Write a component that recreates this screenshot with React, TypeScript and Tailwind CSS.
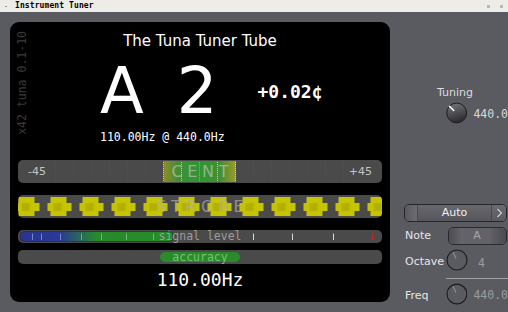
import React from "react";

function CentBar() {
  const ticks: { x: number; c: string; d: string }[] = [];
  for (let k = 0; k < 17; k++) {
    const x = 37.5 + 18 * k;
    let c = "#d01818";
    let d = "3 2";
    if (k === 8) {
      c = "#30e030";
      d = "1.5 1";
    } else if (k >= 6 && k <= 10) {
      c = "#e6e600";
      d = "1 1";
    }
    ticks.push({ x, c, d });
  }
  return (
    <div className="relative mx-[8px] h-[23px] overflow-hidden rounded-[5px] bg-[#4a4a4a]">
      <svg className="absolute inset-0" width="364" height="23">
        <defs>
          <linearGradient id="hl" x1="0" x2="1" y1="0" y2="0">
            <stop offset="0" stopColor="#8e8c28" />
            <stop offset="0.2" stopColor="#428e34" />
            <stop offset="0.5" stopColor="#2e9632" />
            <stop offset="0.78" stopColor="#448e34" />
            <stop offset="1" stopColor="#9c9a2a" />
          </linearGradient>
        </defs>
        <rect x="145.5" y="1" width="72.5" height="21" fill="url(#hl)" />
        {ticks.map((t) => (
          <line
            key={t.x}
            x1={t.x}
            x2={t.x}
            y1={2}
            y2={21}
            stroke={t.c}
            strokeWidth={1}
            strokeDasharray={t.d}
          />
        ))}
      </svg>
      <div className="relative grid h-full grid-cols-[1fr_auto_1fr] items-center px-[10px] font-['DejaVu_Sans',sans-serif]">
        <span className="justify-self-start text-[11px] text-[#c4c4c4]">-45</span>
        <span className="pl-[4.6px] text-[16px] tracking-[4.6px] text-[rgba(205,205,205,0.6)]">CENT</span>
        <span className="justify-self-end text-[11px] text-[#c4c4c4]">+45</span>
      </div>
    </div>
  );
}

function StrobeBar() {
  const centers: number[] = [];
  for (let k = 0; k < 12; k++) centers.push(9.5 + 32 * k);
  return (
    <div className="relative mx-[8px] mt-[12px] h-[23px] overflow-hidden rounded-[5px] bg-[#4a4a4a]">
      <svg className="absolute inset-0" width="364" height="23">
        {centers.map((c) => (
          <g key={c}>
            <rect x={c - 9} y={2} width={16} height={19} fill="#c6c300" />
            <rect x={c - 12} y={8} width={24} height={8} fill="#c6c300" />
            <rect x={c - 6} y={8} width={8} height={8} fill="#b3b000" />
          </g>
        ))}
      </svg>
      <div className="relative flex h-full items-center justify-center font-['DejaVu_Sans',sans-serif]">
        <span className="pl-[4.5px] text-[16px] tracking-[4.5px] text-[rgba(175,175,175,0.7)]">STROBE</span>
      </div>
    </div>
  );
}

function SignalBar() {
  const inFill = [14, 23, 42, 63, 83, 108, 135];
  const outside = [235, 274, 315];
  return (
    <div className="relative mx-[8px] mt-[12px] h-[13px] overflow-hidden rounded-[5px] bg-[#4a4a4a]">
      <svg className="absolute inset-0" width="364" height="13">
        <defs>
          <linearGradient id="sig" x1="0" x2="1" y1="0" y2="0">
            <stop offset="0" stopColor="#283490" />
            <stop offset="0.26" stopColor="#2b3a96" />
            <stop offset="0.37" stopColor="#2a6064" />
            <stop offset="0.5" stopColor="#278a2c" />
            <stop offset="1" stopColor="#268c2a" />
          </linearGradient>
        </defs>
        <rect x="2" y="1.5" width="153" height="10" rx="4" fill="url(#sig)" stroke="#2e2e2e" strokeWidth="0.8" />
        {inFill.map((x) => (
          <line key={x} x1={x + 0.5} x2={x + 0.5} y1={3.5} y2={10} stroke="rgba(210,210,230,0.5)" strokeWidth={1} />
        ))}
        {outside.map((x) => (
          <line key={x} x1={x + 0.5} x2={x + 0.5} y1={3.5} y2={10} stroke="#d6d6d6" strokeWidth={1} />
        ))}
        <line x1={354.5} x2={354.5} y1={3.5} y2={10} stroke="#d42020" strokeWidth={1} />
      </svg>
      <div className="relative flex h-full items-center justify-center font-['DejaVu_Sans_Mono',monospace] text-[11.5px] leading-[13px] text-[#9c9c9c]">
        signal level
      </div>
    </div>
  );
}

function AccuracyBar() {
  return (
    <div className="mx-[8px] mt-[7px] flex h-[14px] items-center justify-center rounded-[5px] bg-[#4a4a4a]">
      <div className="flex h-[10px] w-[80px] items-center justify-center rounded-full bg-[#2a8a2c] font-['DejaVu_Sans_Mono',monospace] text-[11.5px] leading-[10px] text-[#76c276]">
        accuracy
      </div>
    </div>
  );
}

function TuningKnob() {
  return (
    <svg width="22" height="22" viewBox="0 0 22 22">
      <defs>
        <linearGradient id="kg" x1="0" x2="0.3" y1="0" y2="1">
          <stop offset="0" stopColor="#7a7a7e" />
          <stop offset="1" stopColor="#2e2e30" />
        </linearGradient>
      </defs>
      <circle cx="11" cy="11" r="10.2" fill="url(#kg)" stroke="#1a1a1a" strokeWidth="1" />
      <line x1="3.6" y1="4.2" x2="8" y2="8.4" stroke="#ffffff" strokeWidth="1.5" strokeLinecap="round" />
    </svg>
  );
}

function OutlineKnob() {
  return (
    <svg width="22" height="22" viewBox="0 0 22 22">
      <circle cx="11" cy="11" r="10" fill="none" stroke="#1c1c1c" strokeWidth="1.1" />
      <line x1="7.2" y1="3.2" x2="10" y2="9.4" stroke="#8e8e8e" strokeWidth="1.2" />
    </svg>
  );
}

function RightPanel() {
  return (
    <div className="flex w-[118px] flex-col font-['DejaVu_Sans',sans-serif]">
      <div className="mt-[74px] pl-[47px] text-[11px] leading-[13px] text-[#dcdcdc]">Tuning</div>
      <div className="mt-[3px] flex items-start pl-[56px]">
        <TuningKnob />
        <span className="ml-[6px] mt-[6px] font-['DejaVu_Sans_Mono',monospace] text-[11.5px] leading-[13px] text-[#d8d8d8]">
          440.0
        </span>
      </div>

      <div className="ml-[14px] mt-[80px] flex h-[18px] w-[103px] overflow-hidden rounded-[5px] border border-[#26262a] bg-linear-to-b from-[#67676d] to-[#56565c]">
        <div className="w-[13px] border-r border-[#48484e] bg-linear-to-r from-[#58585e] to-[#6c6c72]" />
        <div className="flex flex-1 items-center justify-center text-[11px] text-[#f0f0f0]">Auto</div>
        <div className="flex w-[15px] items-center justify-center border-l border-[#48484e] bg-linear-to-b from-[#6a6a70] to-[#5a5a60]">
          <svg width="7" height="10" viewBox="0 0 7 10">
            <path d="M1.5 1 L5.5 5 L1.5 9" fill="none" stroke="#d2d2d2" strokeWidth="1.1" />
          </svg>
        </div>
      </div>

      <div className="mt-[5px] flex h-[18px] items-center">
        <span className="w-[58px] pl-[15px] text-[11px] text-[#e6e6e6]">Note</span>
        <div className="flex h-[18px] w-[59px] overflow-hidden rounded-[5px] border border-[#2a2a2e] bg-[#626268]">
          <div className="w-[14px] bg-linear-to-r from-[#4c4c52] to-[#66666c]" />
          <div className="flex flex-1 items-center justify-center text-[11px] text-[#a8a8a8]">A</div>
          <div className="w-[15px] bg-linear-to-r from-[#5e5e64] to-[#4a4a50]" />
        </div>
      </div>

      <div className="mt-[4px] flex items-start">
        <span className="mt-[6px] w-[56px] pl-[15px] text-[11px] leading-[13px] text-[#e6e6e6]">Octave</span>
        <OutlineKnob />
        <span className="ml-[10px] mt-[8px] font-['DejaVu_Sans_Mono',monospace] text-[11.5px] leading-[13px] text-[#9c9c9c]">
          4
        </span>
      </div>

      <div className="ml-[56px] mt-[7px] h-px bg-[#a2a2a4]" />

      <div className="mt-[4px] flex items-start">
        <span className="mt-[6px] w-[56px] pl-[15px] text-[11px] leading-[13px] text-[#e6e6e6]">Freq</span>
        <OutlineKnob />
        <span className="ml-[6px] mt-[6px] font-['DejaVu_Sans_Mono',monospace] text-[11.5px] leading-[13px] text-[#9c9c9c]">
          440.0
        </span>
      </div>
    </div>
  );
}

export default function App() {
  return (
    <div className="flex h-[312px] w-[508px] flex-col overflow-hidden bg-[#5a5a61] font-['DejaVu_Sans',sans-serif]">
      <div className="flex h-[12px] items-center bg-[#edece9]">
        <span className="ml-[5px] mt-[1px] h-px w-[2px] bg-[#9a9a9a]" />
        <span className="ml-[8px] font-['DejaVu_Sans_Mono',monospace] text-[8px] font-bold leading-[12px] tracking-[0.1px] text-black">
          Instrument Tuner
        </span>
        <span className="ml-auto h-[3px] w-[3px] bg-[#b8b8b8]" />
        <span className="ml-[10px] mr-[5px] h-[3px] w-[3px] bg-[#b8b8b8]" />
      </div>

      <div className="flex flex-1">
        <div className="ml-[10px] mt-[10px] flex h-[280px] w-[380px] flex-col rounded-[9px] bg-black">
          <div className="flex h-[138px]">
            <div className="w-[30px] pl-[6px] pt-[9px]">
              <span className="block rotate-180 font-['DejaVu_Sans_Mono',monospace] text-[11.5px] leading-[12px] text-[#3a3a3a] [writing-mode:vertical-rl]">
                x42 tuna 0.1-10
              </span>
            </div>
            <div className="flex flex-1 flex-col">
              <div className="mt-[10px] text-center text-[15px] leading-[18px] text-white">The Tuna Tuner Tube</div>
              <div className="mt-[9px] flex items-start pl-[60px] text-white">
                <span className="text-[64px] leading-[64px]">A</span>
                <span className="ml-[33px] text-[64px] leading-[64px]">2</span>
                <span className="ml-[40px] mt-[24px] font-['DejaVu_Sans_Mono',monospace] text-[18px] font-bold leading-[18px]">
                  +0.02¢
                </span>
              </div>
              <div className="mt-[7px] pl-[60px] font-['DejaVu_Sans_Mono',monospace] text-[11.5px] leading-[14px] text-white">
                110.00Hz @ 440.0Hz
              </div>
            </div>
            <div className="w-[30px]" />
          </div>

          <CentBar />
          <StrobeBar />
          <SignalBar />
          <AccuracyBar />

          <div className="mt-[6px] text-center font-['DejaVu_Sans_Mono',monospace] text-[18px] leading-[20px] text-white">
            110.00Hz
          </div>
        </div>
        <RightPanel />
      </div>
    </div>
  );
}
